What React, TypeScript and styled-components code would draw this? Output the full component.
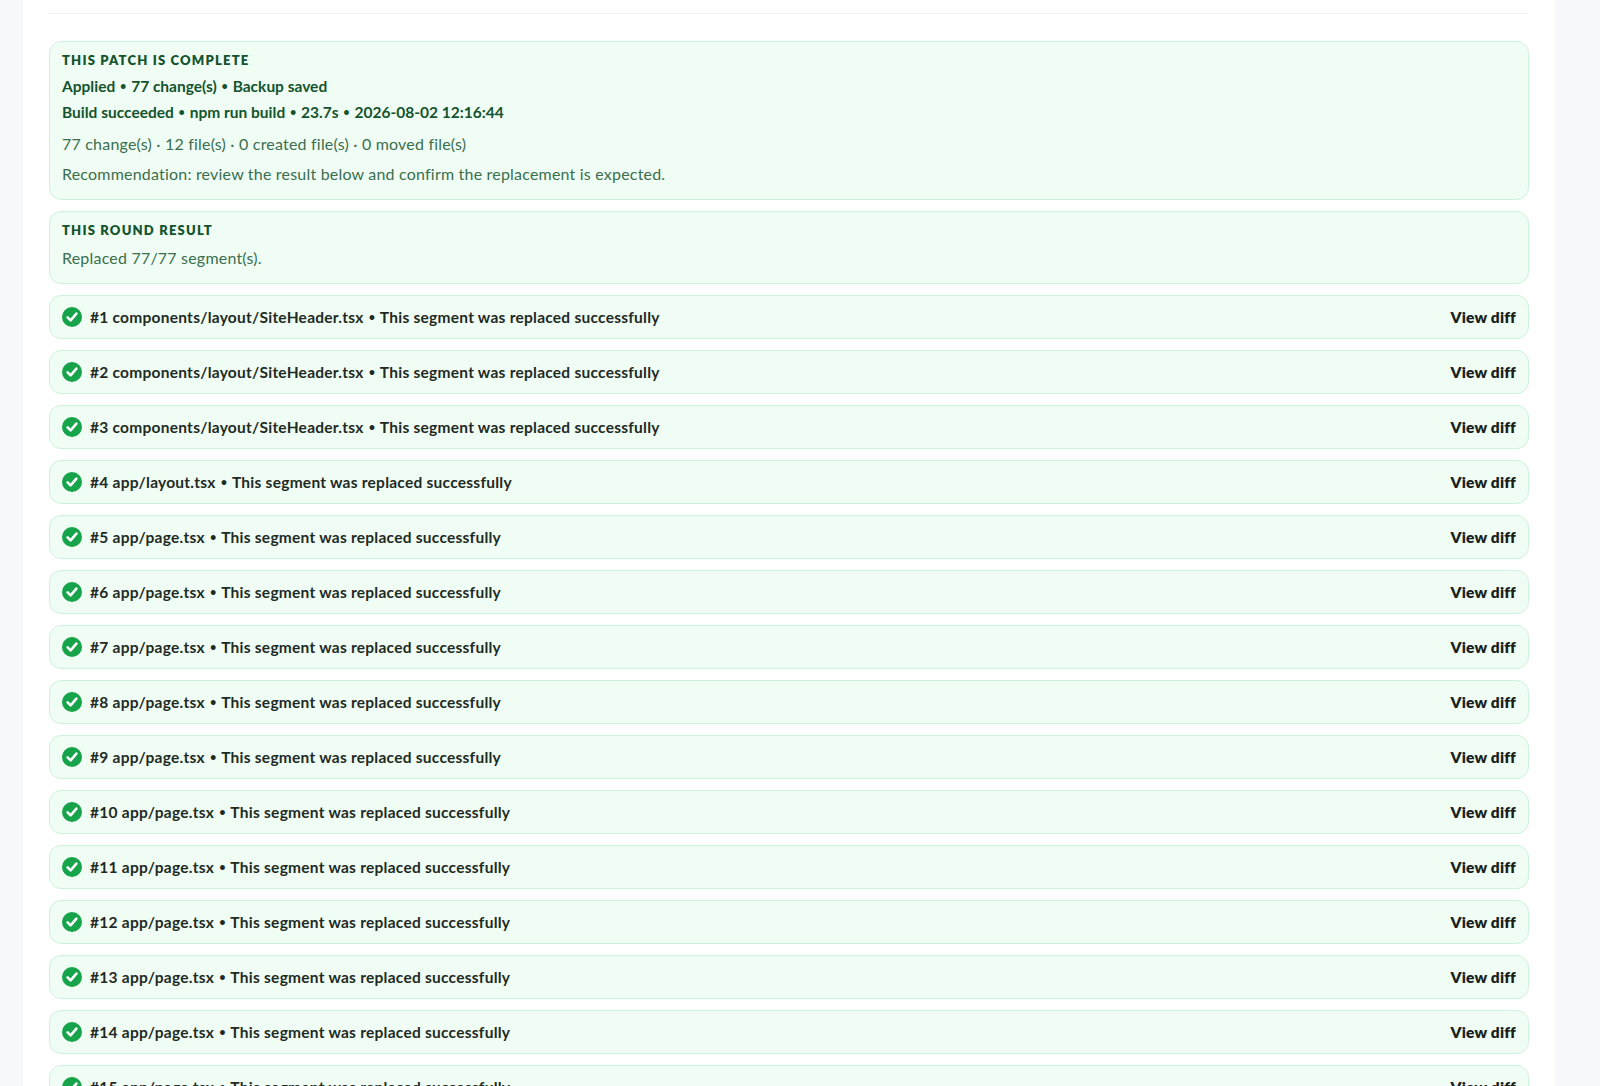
import * as React from 'react';
import styled, { createGlobalStyle } from 'styled-components';

const Global = createGlobalStyle`
    html, body { margin: 0; padding: 0; background: #f7f8fb; }
    body { font-family: Lato, "Noto Sans", sans-serif; overflow: hidden; }
`;

const Panel = styled.div`
    margin-left: 23px;
    width: 1532px;
    min-height: 1086px;
    background: #fff;
    padding: 0 26px;
    box-sizing: border-box;
`;

const Divider = styled.div`
    height: 13px;
    border-bottom: 1px solid #eef0f3;
    margin-bottom: 27px;
`;

const Stack = styled.div`
    display: flex;
    flex-direction: column;
    gap: 11px;
`;

const Card = styled.div`
    background: #effdf4;
    border: 1.5px solid #cdf3dc;
    border-radius: 12px;
    padding: 10px 12px 10px;
`;

const Heading = styled.div`
    font-size: 13px;
    font-weight: 800;
    letter-spacing: 1.2px;
    color: #14532d;
    text-transform: uppercase;
    line-height: 16px;
    margin-bottom: 5px;
`;

const Strong = styled.div`
    font-size: 15.5px;
    font-weight: 700;
    color: #14532d;
    line-height: 26px;
`;

const Body = styled.div<{ $top?: number }>`
    font-size: 16px;
    letter-spacing: 0.2px;
    color: #3b6e4f;
    line-height: 30px;
    margin-top: ${p => p.$top || 0}px;
`;

const Row = styled.div`
    display: flex;
    align-items: center;
    height: 42px;
    background: #effdf4;
    border: 1.5px solid #cdf3dc;
    border-radius: 12px;
    padding: 0 12px;
`;

const Title = styled.div`
    flex: 1;
    font-size: 15.5px;
    letter-spacing: 0.25px;
    font-weight: 700;
    color: #1f2a24;
    margin-left: 8px;
`;

const Dot = styled.span`
    font-size: 11px;
    vertical-align: 2px;
    margin: 0 1px;
`;

const DiffButton = styled.button`
    border: 0;
    background: none;
    padding: 0;
    font-family: inherit;
    font-size: 15.5px;
    letter-spacing: 0.2px;
    font-weight: 800;
    color: #1a1f1c;
    cursor: pointer;
`;

const Check = () => (
    <svg width="20" height="20" viewBox="0 0 20 20">
        <circle cx="10" cy="10" r="10" fill="#16a34a" />
        <path d="M5.6 10.4l3 3 5.8-6.8" fill="none" stroke="#fff" strokeWidth="2.6" strokeLinecap="round" strokeLinejoin="round" />
    </svg>
);

const B = () => <Dot>•</Dot>;

const files = [
    'components/layout/SiteHeader.tsx',
    'components/layout/SiteHeader.tsx',
    'components/layout/SiteHeader.tsx',
    'app/layout.tsx',
    ...Array(11).fill('app/page.tsx'),
];

export default function App() {
    return (
        <>
            <Global />
            <Panel>
                <Divider />
                <Stack>
                    <Card>
                        <Heading>This patch is complete</Heading>
                        <Strong>Applied <B /> 77 change(s) <B /> Backup saved</Strong>
                        <Strong>Build succeeded <B /> npm run build <B /> 23.7s <B /> 2026-08-02 12:16:44</Strong>
                        <Body $top={4}>77 change(s) · 12 file(s) · 0 created file(s) · 0 moved file(s)</Body>
                        <Body>Recommendation: review the result below and confirm the replacement is expected.</Body>
                    </Card>
                    <Card>
                        <Heading>This round result</Heading>
                        <Body>Replaced 77/77 segment(s).</Body>
                    </Card>
                    {files.map((f, i) => (
                        <Row key={i}>
                            <Check />
                            <Title>#{i + 1} {f} <B /> This segment was replaced successfully</Title>
                            <DiffButton>View diff</DiffButton>
                        </Row>
                    ))}
                </Stack>
            </Panel>
        </>
    );
}
